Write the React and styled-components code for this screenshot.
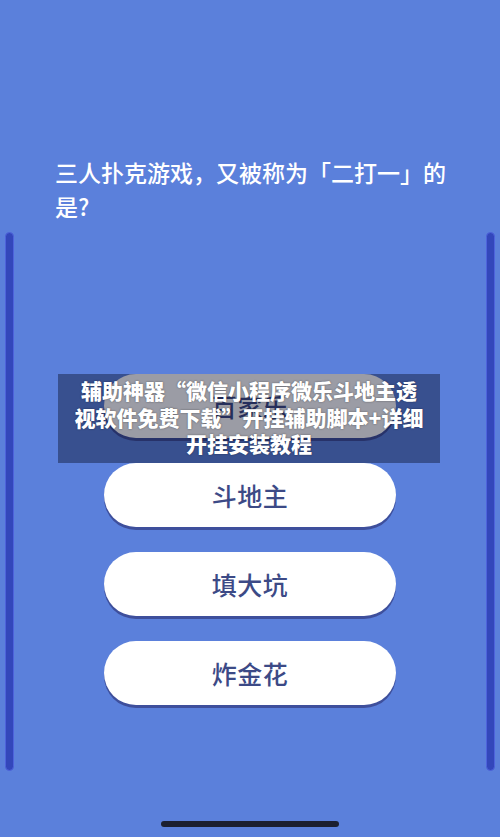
import React from "react";
import styled, { createGlobalStyle } from "styled-components";

const GlobalStyle = createGlobalStyle`
  html, body {
    margin: 0;
    padding: 0;
    background: #5b80db;
  }
  * {
    box-sizing: border-box;
  }
`;

const Screen = styled.div`
  position: relative;
  width: 500px;
  height: 837px;
  display: flex;
  flex-direction: column;
  background: #5b80db;
  font-family: "Noto Sans CJK SC", "Noto Sans", sans-serif;
  overflow: hidden;
`;

const Question = styled.h2`
  margin: 155px 0 0 55px;
  width: 400px;
  font-size: 23px;
  font-weight: 500;
  line-height: 34px;
  color: #ffffff;
`;

const Panel = styled.div`
  display: grid;
  grid-template-columns: 9px 1fr 9px;
  margin-top: 9px;
  padding: 0 5px;
  height: 539px;
`;

const SideBar = styled.div`
  background: #3347bb;
  border: 1px solid #4e63dc;
  border-radius: 5px;
`;

const Options = styled.div`
  display: flex;
  flex-direction: column;
  align-items: center;
  gap: 25px;
  padding-top: 142px;
`;

const OptionButton = styled.button`
  width: 292px;
  height: 64px;
  border: none;
  border-radius: 32px;
  background: #ffffff;
  box-shadow: 0 3px 0 #3e4f9c;
  font-family: "Noto Sans CJK SC", "Noto Sans", sans-serif;
  font-size: 25px;
  font-weight: 500;
  color: #3c4a86;
  letter-spacing: 0.5px;
`;

const Banner = styled.div`
  position: absolute;
  top: 374px;
  left: 58px;
  width: 382px;
  height: 89px;
  padding: 3px 16px 0;
  background: rgba(5, 8, 30, 0.4);
  color: #ffffff;
  font-size: 21px;
  font-weight: 900;
  line-height: 26.5px;
  text-align: center;
  text-shadow: 0 0 2px rgba(0, 0, 0, 0.45);
`;

const HomeIndicator = styled.div`
  align-self: center;
  width: 178px;
  height: 6px;
  margin-top: 50px;
  border-radius: 3px;
  background: #1c2030;
`;

const options = ["百家乐", "斗地主", "填大坑", "炸金花"];

function App() {
  return (
    <Screen>
      <GlobalStyle />
      <Question>三人扑克游戏，又被称为「二打一」的是?</Question>
      <Panel>
        <SideBar />
        <Options>
          {options.map((o) => (
            <OptionButton key={o}>{o}</OptionButton>
          ))}
        </Options>
        <SideBar />
      </Panel>
      <HomeIndicator />
      <Banner>
        辅助神器“微信小程序微乐斗地主透视软件免费下载”开挂辅助脚本+详细开挂安装教程
      </Banner>
    </Screen>
  );
}

export default App;
